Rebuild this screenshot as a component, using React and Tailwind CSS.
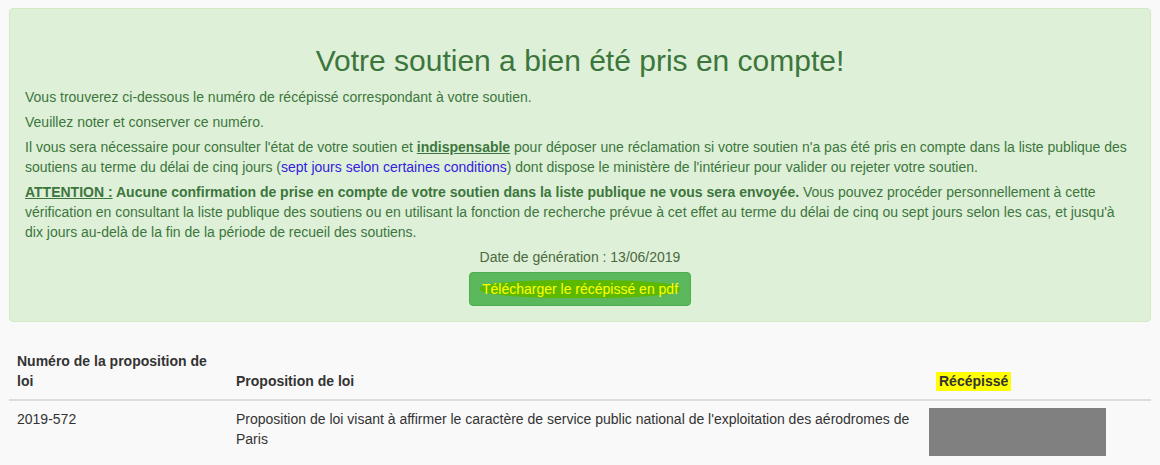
const App = () => {
  return (
    <div className="min-h-screen bg-[#f9f9f9] px-[9px] pt-[8px] font-['Liberation_Sans',Arial,sans-serif] text-[14px] leading-[20px] text-[#333]">
      <div className="bg-[#dff0d8] border border-[#d6e9c6] rounded-[4px] px-[15px] pt-[15px] pb-[15px] text-[#3c763d]">
        <h2 className="text-center text-[30px] leading-[33px] mt-[20px] mb-[10px]">
          Votre soutien a bien été pris en compte!
        </h2>
        <p className="mb-[5px]">Vous trouverez ci-dessous le numéro de récépissé correspondant à votre soutien.</p>
        <p className="mb-[5px]">Veuillez noter et conserver ce numéro.</p>
        <p className="mb-[5px]">
          Il vous sera nécessaire pour consulter l'état de votre soutien et{" "}
          <strong className="underline">indispensable</strong> pour déposer une réclamation si votre soutien n'a pas
          été pris en compte dans la liste publique des soutiens au terme du délai de cinq jours (
          <a href="#" className="text-[#3320e0]">sept jours selon certaines conditions</a>) dont dispose le ministère
          de l'intérieur pour valider ou rejeter votre soutien.
        </p>
        <p className="mb-[5px]">
          <strong>
            <span className="underline">ATTENTION :</span> Aucune confirmation de prise en compte de votre soutien
            dans la liste publique ne vous sera envoyée.
          </strong>{" "}
          Vous pouvez procéder personnellement à cette vérification en consultant la liste publique des soutiens ou en
          utilisant la fonction de recherche prévue à cet effet au terme du délai de cinq ou sept jours selon les cas,
          et jusqu'à dix jours au-delà de la fin de la période de recueil des soutiens.
        </p>
        <p className="text-center mb-[5px] text-[#4a6a3e]">Date de génération : 13/06/2019</p>
        <div className="flex justify-center">
          <button className="bg-[#5cb85c] border border-[#4cae4c] rounded-[4px] px-[12px] py-[6px] leading-[20px] text-[14px] text-[#ffff00]">
            <span className="bg-[#5cb800] rounded-[45%] px-[2px] -mx-[2px] py-[1px]">Télécharger le récépissé en pdf</span>
          </button>
        </div>
      </div>

      <table className="w-full mt-[21px] border-collapse">
        <thead>
          <tr className="border-b-2 border-[#ddd]">
            <th className="w-[219px] text-left align-bottom font-bold p-[8px]">Numéro de la proposition de loi</th>
            <th className="w-[701px] text-left align-bottom font-bold p-[8px]">Proposition de loi</th>
            <th className="text-left align-bottom font-bold p-[8px]">
              <span className="bg-[#ffff00] px-[3px] -ml-[1px] pt-[1px] pb-[2px]">Récépissé</span>
            </th>
          </tr>
        </thead>
        <tbody>
          <tr>
            <td className="align-top p-[8px]">2019-572</td>
            <td className="align-top p-[8px]">
              Proposition de loi visant à affirmer le caractère de service public national de l'exploitation des
              aérodromes de Paris
            </td>
            <td className="align-top pt-[7px] pb-[8px]">
              <div className="w-[177px] h-[48px] bg-[#808080]"></div>
            </td>
          </tr>
        </tbody>
      </table>
    </div>
  );
};

export default App;
